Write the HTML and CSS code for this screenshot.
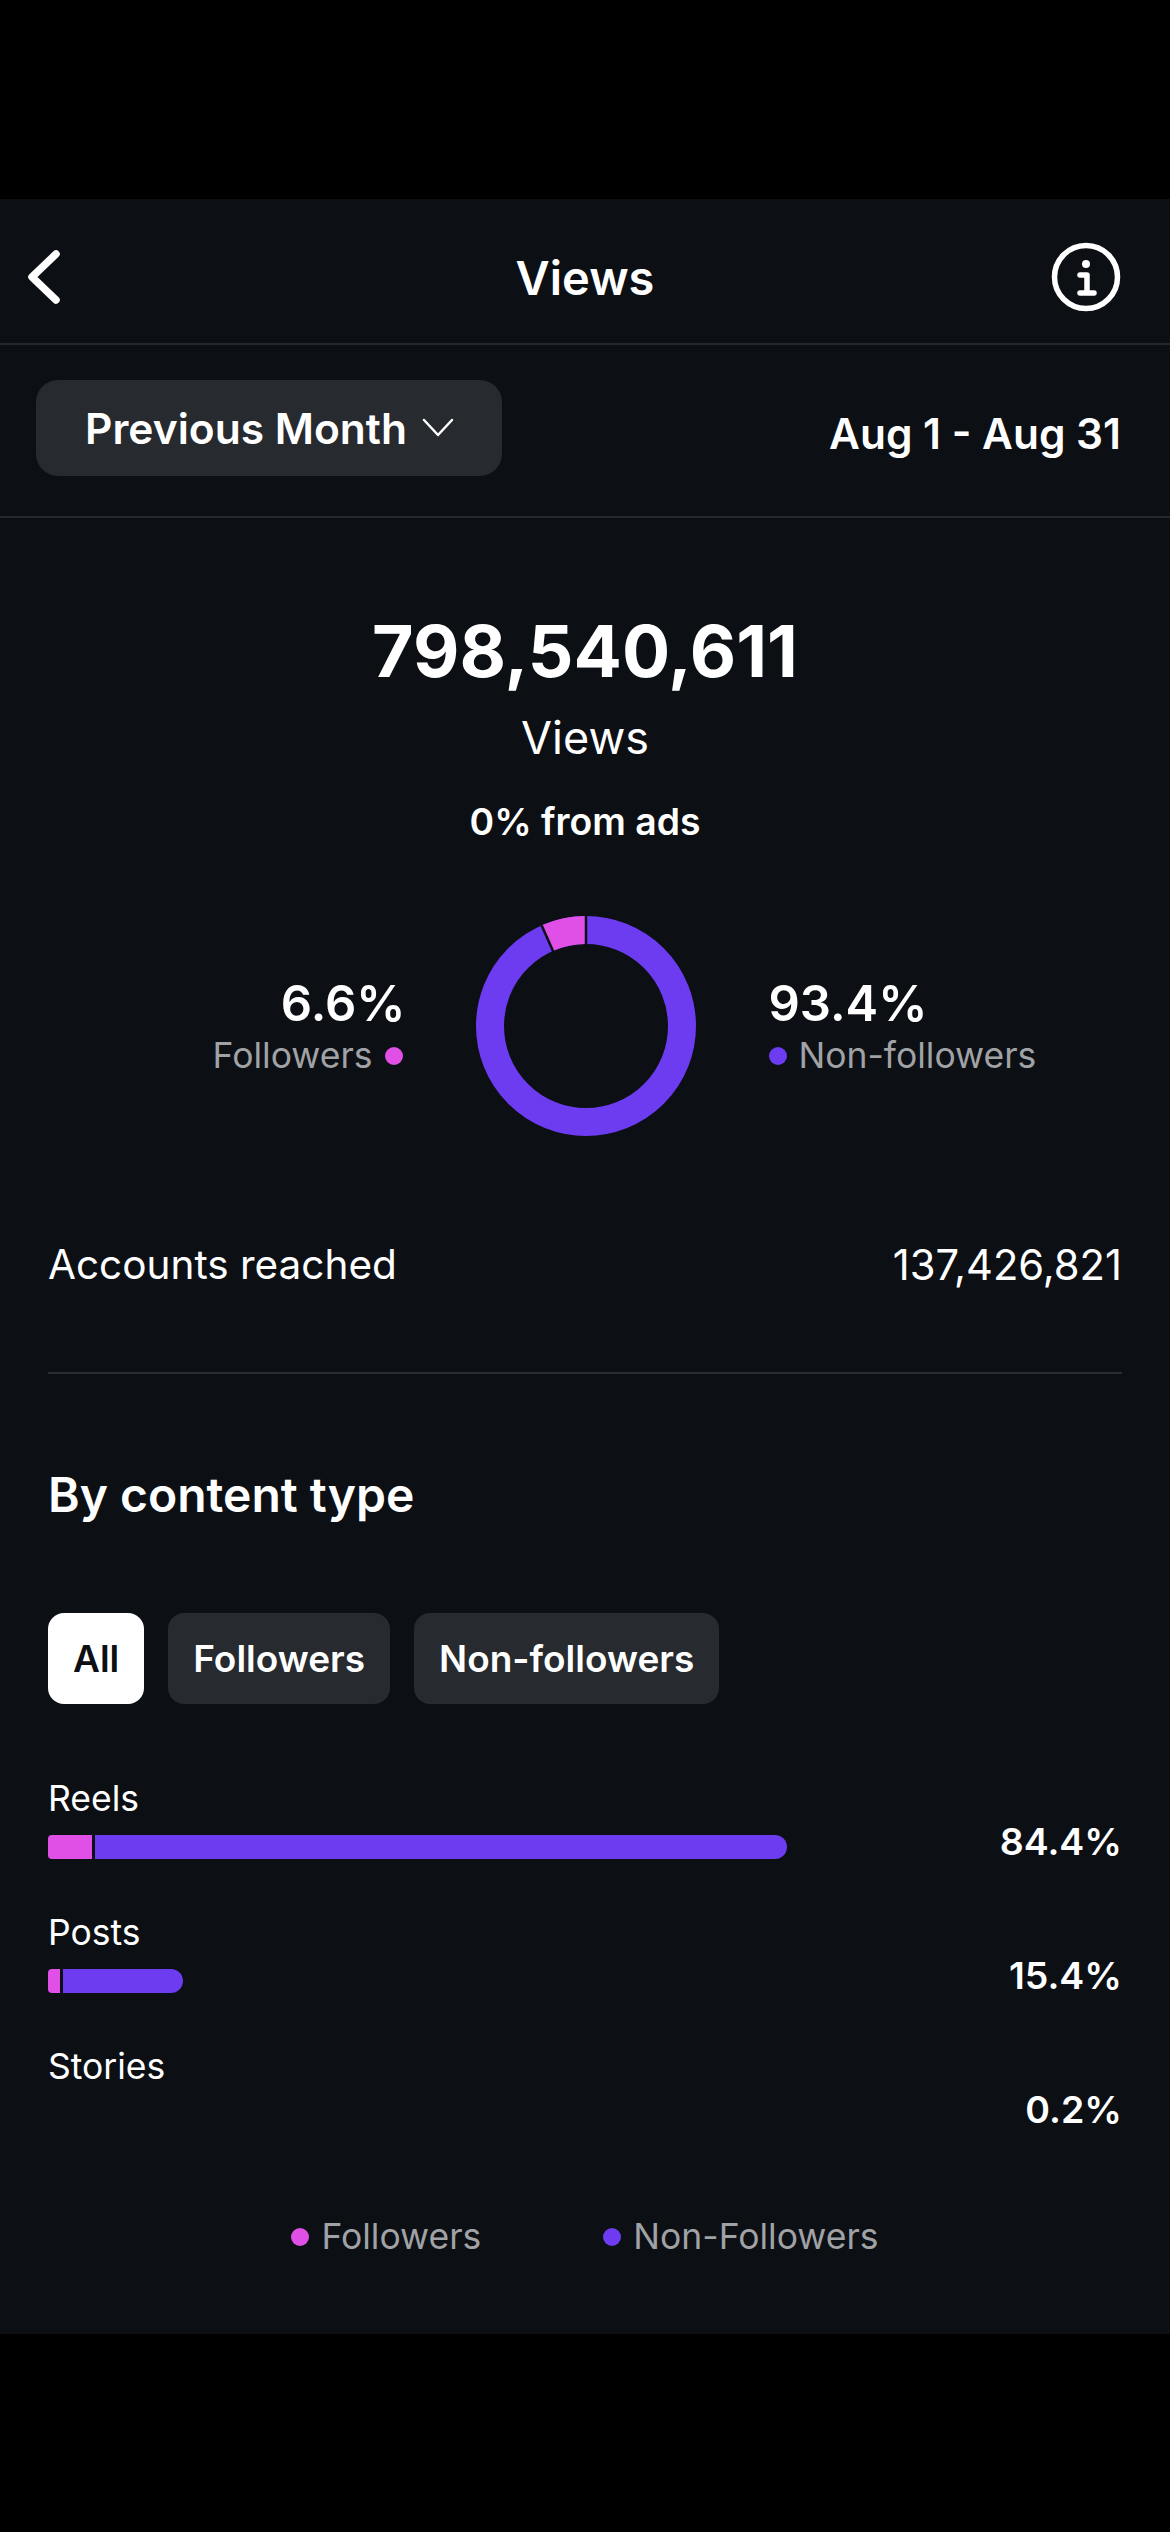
FILE: index.html
```html
<!DOCTYPE html>
<html lang="en">
<head>
    <meta charset="UTF-8">
    <meta name="viewport" content="width=device-width, initial-scale=1.0">
    <title>Views</title>
    <link rel="stylesheet" href="styles.css">
</head>
<body>
    <div class="screen">
        <header class="topbar">
            <svg class="back-icon" width="36" height="60" viewBox="0 0 36 60">
                <path d="M31 7 L7 30 L31 53" fill="none" stroke="#fff" stroke-width="7.5" stroke-linecap="round" stroke-linejoin="round"/>
            </svg>
            <h1>Views</h1>
            <svg class="info-icon" width="70" height="70" viewBox="0 0 70 70">
                <circle cx="35" cy="35" r="31.5" fill="none" stroke="#fff" stroke-width="5.5"/>
                <circle cx="35" cy="22" r="4" fill="#fff"/>
                <path d="M29 33 H36 V51 M29 51 H43" fill="none" stroke="#fff" stroke-width="5.5" stroke-linecap="round" stroke-linejoin="round"/>
            </svg>
        </header>

        <div class="filter-row">
            <div class="period-btn">
                <span>Previous Month</span>
                <svg width="32" height="20" viewBox="0 0 32 20">
                    <path d="M2 2 L16 17 L30 2" fill="none" stroke="#fff" stroke-width="2.5" stroke-linecap="round" stroke-linejoin="round"/>
                </svg>
            </div>
            <div class="date-range">Aug 1 - Aug 31</div>
        </div>

        <section class="summary">
            <div class="total">798,540,611</div>
            <div class="total-label">Views</div>
            <div class="ads-note">0% from ads</div>

            <div class="donut-row">
                <div class="donut-side left">
                    <div class="pct">6.6%</div>
                    <div class="legend-item"><span>Followers</span><i class="dot pink"></i></div>
                </div>
                <svg class="donut" width="220" height="220" viewBox="0 0 220 220">
                    <circle cx="110" cy="110" r="96" fill="none" stroke="#6d3bf0" stroke-width="28"/>
                    <circle cx="110" cy="110" r="96" fill="none" stroke="#e04fe6" stroke-width="28" pathLength="100" stroke-dasharray="6.6 93.4" transform="rotate(-113.76 110 110)"/>
                    <line x1="110" y1="0" x2="110" y2="30" stroke="#0c0f14" stroke-width="2.5"/>
                    <line x1="65.7" y1="9.4" x2="77.9" y2="37" stroke="#0c0f14" stroke-width="2.5"/>
                </svg>
                <div class="donut-side right">
                    <div class="pct">93.4%</div>
                    <div class="legend-item"><i class="dot purple"></i><span>Non-followers</span></div>
                </div>
            </div>

            <div class="reached">
                <span class="reached-label">Accounts reached</span>
                <span class="reached-value">137,426,821</span>
            </div>
        </section>

        <section class="content-type">
            <h2>By content type</h2>
            <div class="tabs">
                <div class="tab active">All</div>
                <div class="tab">Followers</div>
                <div class="tab">Non-followers</div>
            </div>

            <div class="type-row">
                <div class="type-main">
                    <div class="type-name">Reels</div>
                    <div class="bar">
                        <div class="seg-pink" style="width: 44px"></div>
                        <div class="seg-purple" style="width: 692px"></div>
                    </div>
                </div>
                <div class="type-pct">84.4%</div>
            </div>
            <div class="type-row">
                <div class="type-main">
                    <div class="type-name">Posts</div>
                    <div class="bar">
                        <div class="seg-pink" style="width: 12px"></div>
                        <div class="seg-purple" style="width: 120px"></div>
                    </div>
                </div>
                <div class="type-pct">15.4%</div>
            </div>
            <div class="type-row">
                <div class="type-main">
                    <div class="type-name">Stories</div>
                    <div class="bar"></div>
                </div>
                <div class="type-pct">0.2%</div>
            </div>

            <div class="bottom-legend">
                <div class="legend-item"><i class="dot pink"></i><span>Followers</span></div>
                <div class="legend-item"><i class="dot purple"></i><span>Non-Followers</span></div>
            </div>
        </section>
    </div>
</body>
</html>
```

FILE: styles.css
```css
* {
    box-sizing: border-box;
}
body {
    margin: 0;
    background-color: #000;
    font-family: Inter, "Liberation Sans", sans-serif;
    color: #fff;
}
.screen {
    margin-top: 199px;
    width: 1170px;
    height: 2135px;
    background-color: #0c0f14;
    overflow: hidden;
}
.topbar {
    display: grid;
    grid-template-columns: 1fr auto 1fr;
    align-items: center;
    height: 146px;
    padding: 12px 49px 0;
    border-bottom: 2px solid #24272c;
}
.topbar h1 {
    margin: 0;
    font-size: 47px;
    font-weight: 600;
}
.back-icon {
    margin-left: -24px;
}
.info-icon {
    justify-self: end;
}
.filter-row {
    display: flex;
    justify-content: space-between;
    align-items: center;
    height: 173px;
    padding: 0 49px 0 36px;
    border-bottom: 2px solid #24272c;
}
.period-btn {
    display: flex;
    align-items: center;
    gap: 15px;
    width: 466px;
    height: 96px;
    padding-left: 49px;
    margin-bottom: 5px;
    background-color: #272a2f;
    border-radius: 22px;
    font-size: 42.5px;
    font-weight: 600;
}
.date-range {
    font-size: 42.4px;
    font-weight: 600;
    margin-top: 6px;
}
.summary {
    padding: 0 48px;
}
.total {
    margin-top: 87px;
    text-align: center;
    font-size: 71.5px;
    font-weight: 700;
    line-height: 92px;
}
.total-label {
    margin-top: 12px;
    text-align: center;
    font-size: 45px;
    font-weight: 400;
    line-height: 58px;
}
.ads-note {
    margin-top: 33px;
    text-align: center;
    font-size: 37.3px;
    font-weight: 600;
    line-height: 44px;
}
.donut-row {
    display: grid;
    grid-template-columns: 1fr 220px 1fr;
    align-items: center;
    column-gap: 73px;
    margin-top: 72px;
    margin-left: 1px;
}
.donut {
    display: block;
}
.donut-side.left {
    display: flex;
    flex-direction: column;
    align-items: flex-end;
}
.donut-side.left .pct {
    margin-right: -3px;
}
.donut-side.right {
    display: flex;
    flex-direction: column;
    align-items: flex-start;
}
.pct {
    font-size: 49px;
    font-weight: 600;
    line-height: 60px;
}
.legend-item {
    display: flex;
    align-items: center;
    gap: 12px;
    font-size: 35.5px;
    line-height: 44px;
    color: #a0a2a6;
}
.dot {
    display: block;
    width: 18px;
    height: 18px;
    border-radius: 50%;
}
.dot.pink {
    background-color: #e04fe6;
}
.dot.purple {
    background-color: #6d3bf0;
}
.reached {
    display: flex;
    justify-content: space-between;
    align-items: center;
    margin-top: 103px;
    padding-bottom: 81px;
    border-bottom: 2px solid #2b2e33;
    line-height: 52px;
}
.reached-label {
    font-size: 40.5px;
}
.reached-value {
    font-size: 41.7px;
}
.content-type {
    padding: 0 48px;
}
.content-type h2 {
    margin: 92px 0 0;
    font-size: 48px;
    font-weight: 600;
    line-height: 58px;
}
.tabs {
    display: flex;
    gap: 24px;
    margin-top: 89px;
    margin-bottom: 73px;
}
.tab {
    display: flex;
    align-items: center;
    height: 91px;
    padding: 0 25px;
    background-color: #272a2f;
    border-radius: 16px;
    font-size: 37px;
    font-weight: 600;
}
.tab.active {
    background-color: #fff;
    color: #0c0f14;
}
.type-row {
    display: flex;
    justify-content: space-between;
    align-items: flex-end;
    margin-bottom: 52px;
}
.type-main {
    flex: 1;
}
.type-name {
    font-size: 35.5px;
    line-height: 44px;
}
.bar {
    display: flex;
    gap: 3px;
    height: 24px;
    margin-top: 14px;
}
.seg-pink {
    background-color: #e04fe6;
    border-radius: 4px 0 0 4px;
}
.seg-purple {
    background-color: #6d3bf0;
    border-radius: 0 12px 12px 0;
}
.type-pct {
    font-size: 37.5px;
    font-weight: 600;
    line-height: 34px;
}
.bottom-legend {
    display: flex;
    justify-content: center;
    gap: 122px;
    margin-top: 88px;
}
```
